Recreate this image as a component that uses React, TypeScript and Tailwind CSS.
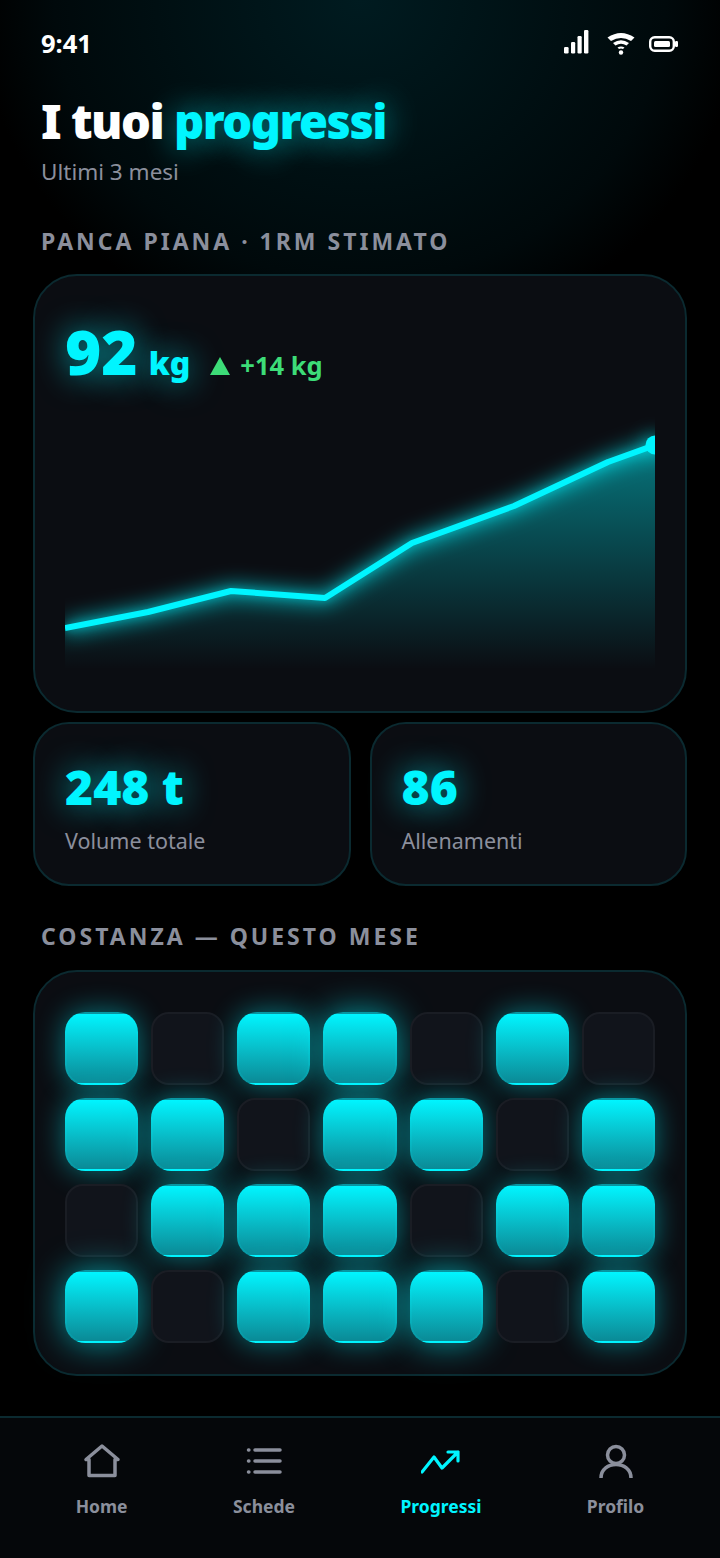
import React from "react";

const font = "font-['Noto_Sans','Open_Sans',sans-serif]";
const rows = [
  [1, 0, 1, 2, 0, 1, 0],
  [1, 1, 0, 1, 1, 0, 1],
  [0, 1, 1, 1, 0, 1, 1],
  [2, 0, 1, 1, 2, 0, 1],
];

function Cell({ on }: { on: number }) {
  if (on === 0) return <div className="h-[73px] rounded-[18px] bg-[#11141b] border-2 border-[#1a1d24]" />;
  return (
    <div
      className={
        on === 2
          ? "h-[73px] rounded-[20px] border-2 border-[rgba(0,245,255,0.1)] bg-linear-to-b from-[#00f5ff] to-[#0a8a96] shadow-[0_0_34px_rgba(0,245,255,0.6)]"
          : "h-[73px] rounded-[20px] border-2 border-[rgba(0,245,255,0.1)] bg-linear-to-b from-[#00f5ff] to-[#0a8a96] shadow-[0_0_28px_rgba(0,245,255,0.45)]"
      }
    />
  );
}

function NavItem({ label, active, sw = 3.5, children }: { label: string; active?: boolean; sw?: number; children: React.ReactNode }) {
  return (
    <div className="flex flex-col items-center gap-[13px]">
      <svg width="40" height="40" viewBox="0 0 40 40" fill="none" stroke={active ? "#00f5ff" : "#8b8f9c"} strokeWidth={sw} strokeLinecap="round" strokeLinejoin="round">
        {children}
      </svg>
      <span className={`text-[17.5px] leading-[24px] font-bold ${active ? "text-[#00f5ff]" : "text-[#8b8f9c]"}`}>{label}</span>
    </div>
  );
}

const line = "M0 224 L83 208 L166 187 L260 194 L347 139 L449 102 L543 58 L590 41";

export default function App() {
  return (
    <div className={`${font} relative w-[720px] h-[1558px] overflow-hidden bg-black flex flex-col`}>
      <div className="absolute left-0 top-0 w-[720px] h-[330px] bg-[radial-gradient(ellipse_at_top,#001b20_0%,#00090b_60%,#000000_75%)]" />
      <div className="relative flex items-start justify-between pl-[41px] pr-[42px] pt-[25px] h-[62px]">
        <span className="text-[25.5px] leading-[36px] font-bold text-white">9:41</span>
        <div className="flex items-start gap-[14px] pt-[5px]">
          <svg className="mr-[4px]" width="25" height="24" viewBox="0 0 25 24" fill="#fff">
            <rect x="0" y="17" width="4.6" height="6.5" rx="1.2" />
            <rect x="7" y="12" width="4.2" height="11.5" rx="1.2" />
            <rect x="13.5" y="6" width="4.2" height="17.5" rx="1.2" />
            <rect x="20" y="0" width="4.4" height="23.5" rx="1.2" />
          </svg>
          <svg className="mt-[2px]" width="28" height="24" viewBox="0 0 28 24" fill="#fff">
            <path d="M0.5 5.5 Q14 -3.5 27.5 5.5 L24 9 Q14 3 4 9 Z" />
            <path d="M6 11 Q14 5.5 22 11 L19.5 13.5 Q14 10 8.5 13.5 Z" />
            <path d="M10.5 15.5 Q14 13.5 17.5 15.5 L16 17 Q14 16 12 17 Z" />
            <circle cx="14" cy="20.5" r="2.2" />
          </svg>
          <svg className="mt-[6px]" width="29" height="16" viewBox="0 0 29 16" fill="none">
            <rect x="1.2" y="1.2" width="23.6" height="13.6" rx="4.5" stroke="#fff" strokeWidth="2.4" />
            <rect x="5" y="5" width="16" height="6" rx="1.5" fill="#fff" />
            <rect x="26" y="5" width="3" height="6" rx="1.2" fill="#fff" />
          </svg>
        </div>
      </div>

      <div className="relative px-[33px] pt-[30px] flex flex-col flex-1">
        <h1 className="pl-[8px] text-[47px] leading-[58px] font-black text-white tracking-[-1.5px]">
          I tuoi <span className="text-[#00f5ff] [text-shadow:0_0_32px_rgba(0,245,255,0.6)]">progressi</span>
        </h1>
        <p className="pl-[8px] mt-[7px] text-[22.5px] leading-[30px] text-[#8b8f9c]">Ultimi 3 mesi</p>

        <h2 className="pl-[8px] mt-[38px] text-[23px] leading-[32px] font-bold tracking-[3px] text-[#8b8f9c]">PANCA PIANA · 1RM STIMATO</h2>

        <div className="mt-[17px] h-[439px] rounded-[44px] border-2 border-[#0b2a30] bg-[#0b0d12] px-[30px] pt-[44px]">
          <div className="flex items-baseline h-[62px]">
            <span className="text-[62px] leading-[62px] font-black text-[#00f5ff] [text-shadow:0_0_32px_rgba(0,245,255,0.65)]">92</span>
            <span className="ml-[11px] text-[32px] leading-[40px] font-black text-[#00f5ff] [text-shadow:0_0_32px_rgba(0,245,255,0.65)]">kg</span>
            <svg className="ml-[20px]" width="20" height="18" viewBox="0 0 20 18" fill="#3ddc78"><path d="M10 0 L20 18 H0 Z" /></svg>
            <span className="ml-[10px] text-[25.5px] leading-[34px] font-bold text-[#3ddc78]">+14 kg</span>
          </div>
          <svg className="mt-[22px] block" width="590" height="265" viewBox="0 0 590 265">
            <defs>
              <linearGradient id="area" x1="0" y1="0" x2="0" y2="1">
                <stop offset="0" stopColor="#00f5ff" stopOpacity="0.45" />
                <stop offset="1" stopColor="#00f5ff" stopOpacity="0" />
              </linearGradient>
              <filter id="glow" x="-10%" y="-30%" width="120%" height="160%">
                <feGaussianBlur stdDeviation="10" />
              </filter>
              <filter id="glowNear" x="-10%" y="-30%" width="120%" height="160%">
                <feGaussianBlur stdDeviation="4" />
              </filter>
              <filter id="dotGlow" x="-200%" y="-200%" width="500%" height="500%">
                <feGaussianBlur stdDeviation="9" />
              </filter>
            </defs>
            <path d={`${line} V265 H0 Z`} fill="url(#area)" />
            <path d={line} fill="none" stroke="#00f5ff" strokeWidth="10" strokeOpacity="0.8" filter="url(#glow)" />
            <path d={line} fill="none" stroke="#00f5ff" strokeWidth="6" strokeOpacity="0.45" filter="url(#glowNear)" />
            <circle cx="590" cy="41" r="9.5" fill="#00f5ff" fillOpacity="0.6" filter="url(#dotGlow)" />
            <path d={line} fill="none" stroke="#00f5ff" strokeWidth="6" strokeLinejoin="round" />
            <circle cx="590" cy="41" r="9.5" fill="#00f5ff" />
          </svg>
        </div>

        <div className="mt-[9px] grid grid-cols-2 gap-[19px]">
          {[["248 t", "Volume totale"], ["86", "Allenamenti"]].map(([v, l]) => (
            <div key={l} className="h-[164px] rounded-[36px] border-2 border-[#0b2a30] bg-[#0b0d12] pl-[30px] pt-[33px]">
              <div className="text-[48px] leading-[60px] font-black text-[#00f5ff] [text-shadow:0_0_32px_rgba(0,245,255,0.65)]">{v}</div>
              <div className="mt-[9px] text-[21.5px] leading-[30px] text-[#8b8f9c]">{l}</div>
            </div>
          ))}
        </div>

        <h2 className="pl-[8px] mt-[34px] text-[23px] leading-[32px] font-bold tracking-[3px] text-[#8b8f9c]">COSTANZA — QUESTO MESE</h2>

        <div className="mt-[18px] h-[406px] rounded-[44px] border-2 border-[#0b2a30] bg-[#0b0d12] px-[30px] pt-[40px] grid grid-cols-7 gap-[13px] content-start">
          {rows.flat().map((on, i) => (
            <Cell key={i} on={on} />
          ))}
        </div>
      </div>

      <nav className="relative h-[142px] border-t-2 border-[#0b2a30] bg-[#05070a] flex justify-around px-[23px] pt-[23px]">
        <NavItem label="Home">
          <path d="M20 5 L4 18.5 H7 V34.5 H33 V18.5 H36 Z" />
        </NavItem>
        <NavItem label="Schede">
          <path d="M11 9 H36 M11 20 H36 M11 31 H36 M4.5 9 H4.9 M4.5 20 H4.9 M4.5 31 H4.9" />
        </NavItem>
        <NavItem active label="Progressi" sw={3.2}>
          <path d="M1 31 L13 16 L21 27 L37 11 M27 11 H37 V20" />
        </NavItem>
        <NavItem label="Profilo">
          <circle cx="20" cy="14" r="8.5" />
          <path d="M5 37 C5 19 35 19 35 37" strokeLinecap="butt" />
        </NavItem>
      </nav>
    </div>
  );
}
